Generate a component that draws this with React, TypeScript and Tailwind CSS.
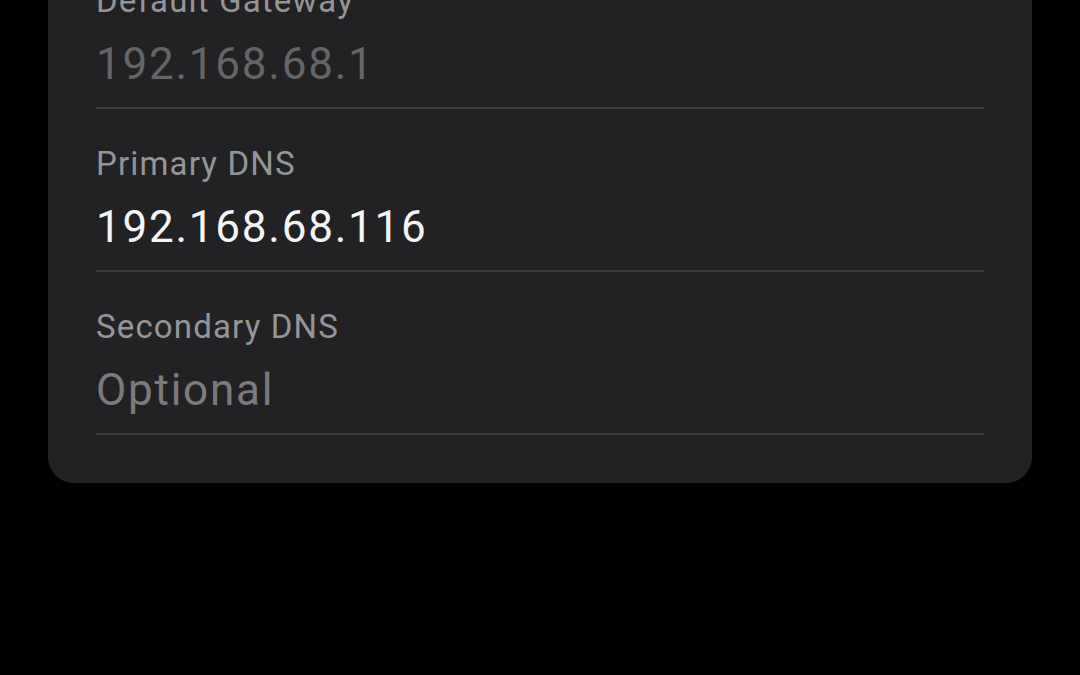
import React from "react";

type Row = { label: string; value: string; tone: "dim" | "bright" | "hint" };

const rows: Row[] = [
  { label: "Default Gateway", value: "192.168.68.1", tone: "dim" },
  { label: "Primary DNS", value: "192.168.68.116", tone: "bright" },
  { label: "Secondary DNS", value: "Optional", tone: "hint" },
];

function Field({ row }: { row: Row }) {
  const valueColor =
    row.tone === "bright"
      ? "text-[#f5f5f5]"
      : row.tone === "dim"
      ? "text-[#656567]"
      : "text-[#7b7b7d]";
  return (
    <div className="flex flex-col">
      <div className="pt-[35px] h-[75px] flex items-end">
        <span className="text-[33px] leading-[40px] h-[40px] tracking-[0.035em] text-[#959597]">
          {row.label}
        </span>
      </div>
      <div className="mt-[15px] h-[56px] flex items-center">
        <span className={`text-[44px] leading-[56px] tracking-[0.04em] ${valueColor}`}>
          {row.value}
        </span>
      </div>
      <div className="mt-[15px] h-[2px] bg-[#3d3d3f]" />
    </div>
  );
}

export default function App() {
  return (
    <div
      className="w-[1080px] h-[675px] bg-black overflow-hidden px-[48px]"
      style={{ fontFamily: "Roboto, 'Noto Sans', sans-serif" }}
    >
      <div className="-mt-[54px] bg-[#222224] rounded-[26px] px-[48px] pb-[48px]">
        {rows.map((r) => (
          <Field key={r.label} row={r} />
        ))}
      </div>
    </div>
  );
}
